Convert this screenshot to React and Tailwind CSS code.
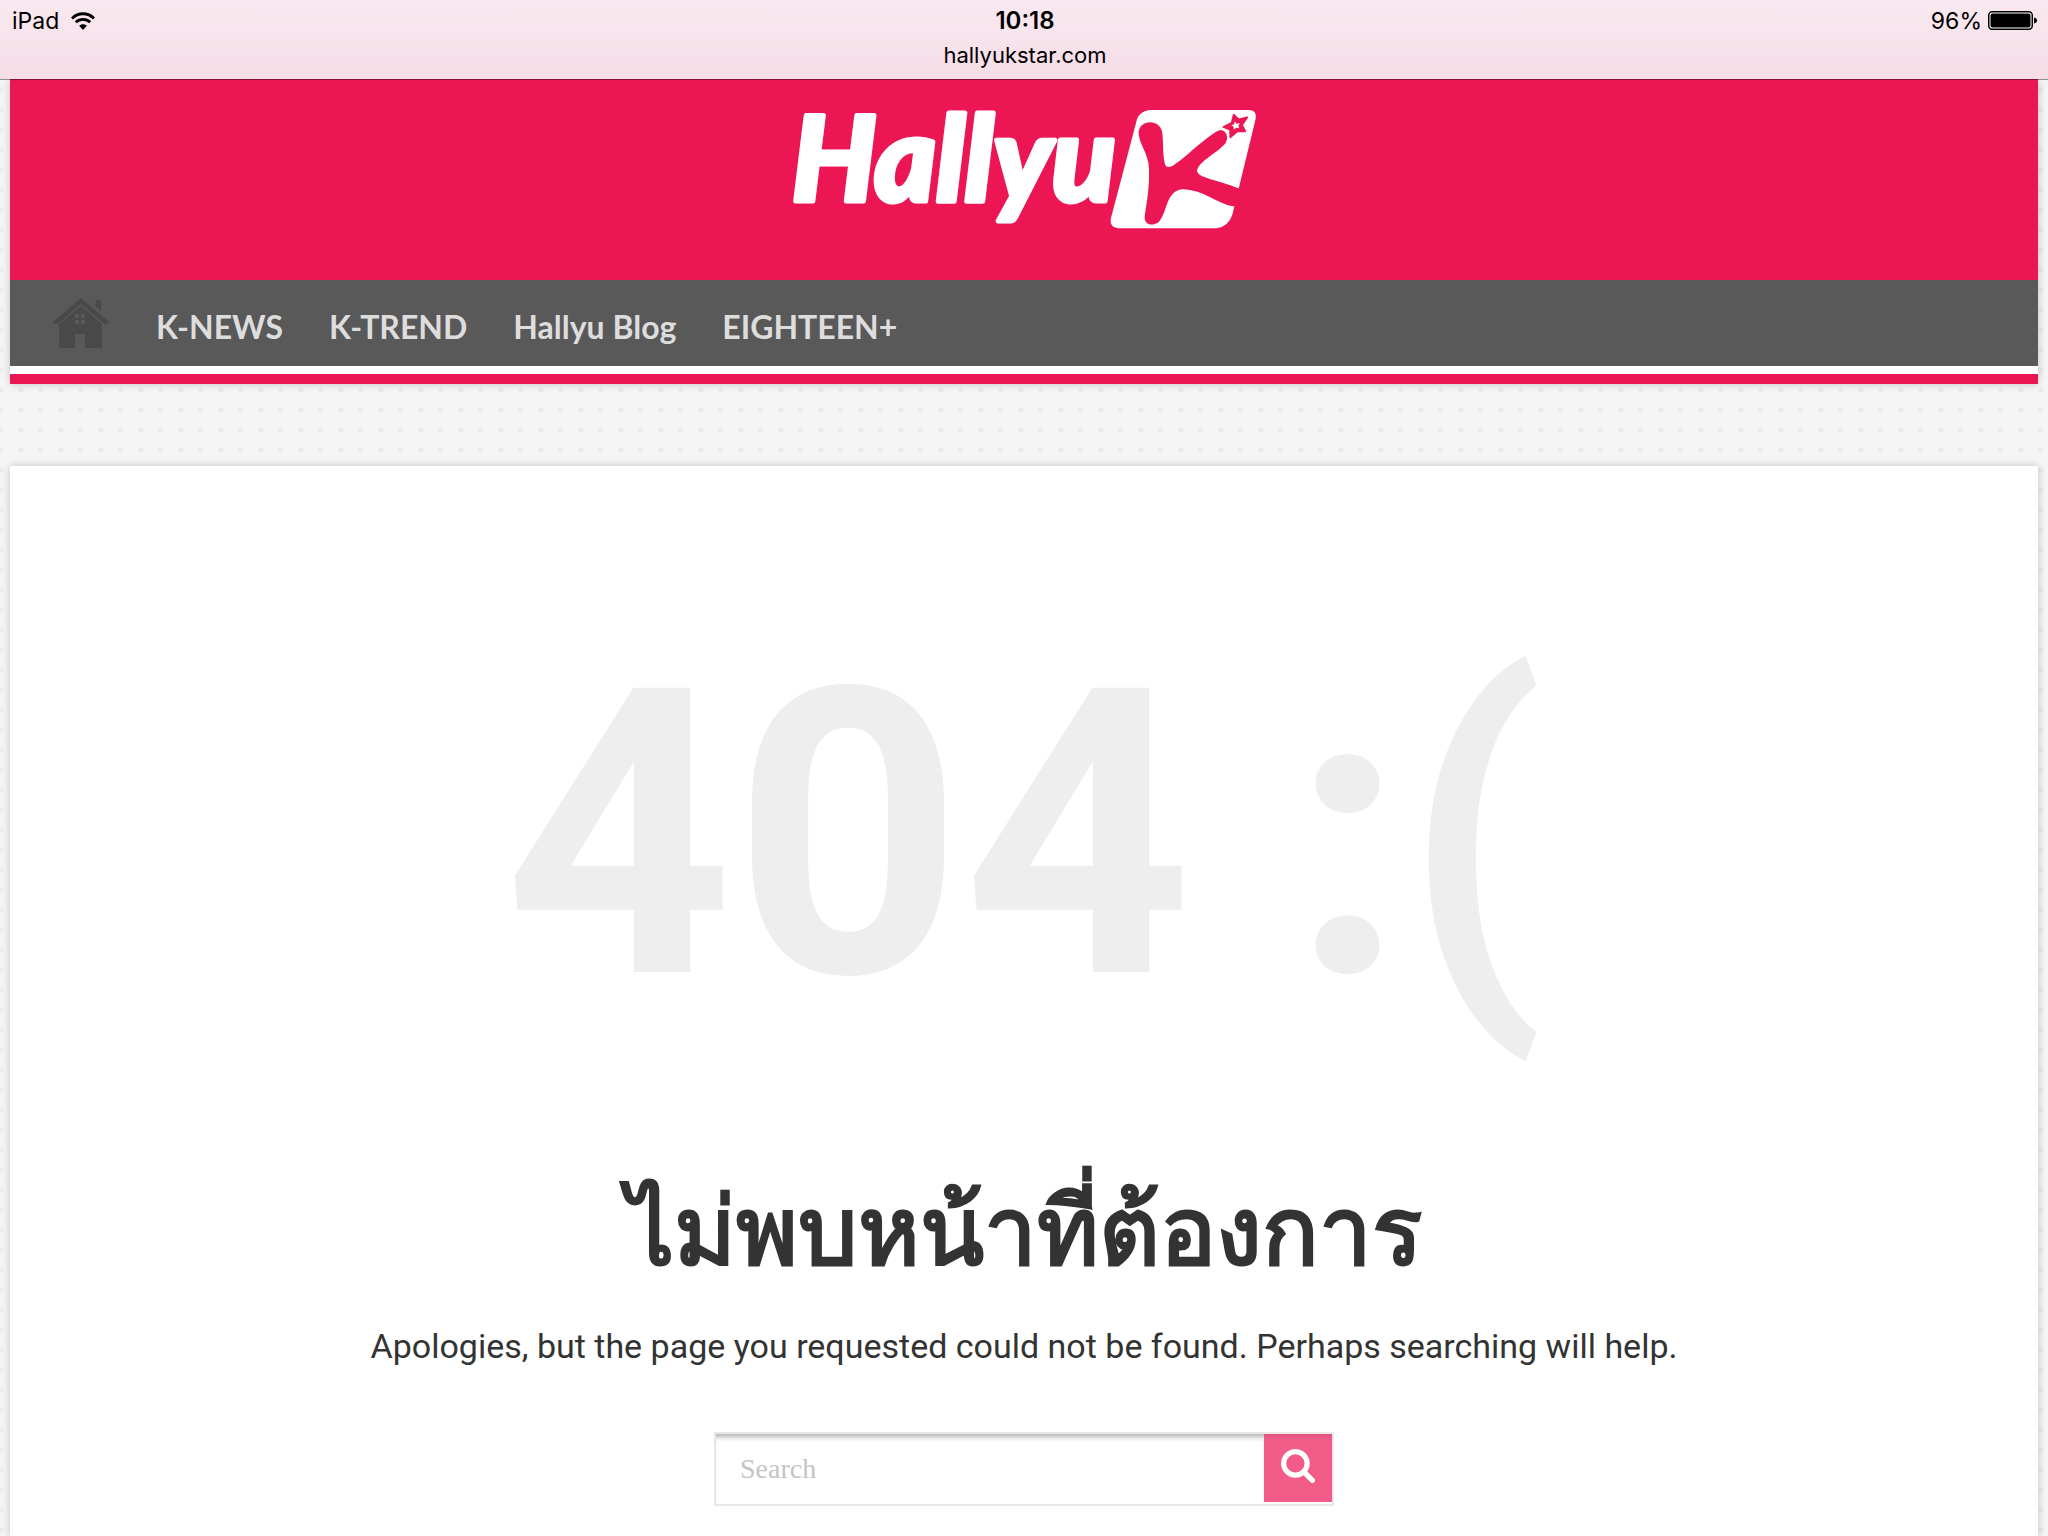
const links = ['K-NEWS', 'K-TREND', 'Hallyu Blog', 'EIGHTEEN+'];

function WifiIcon() {
  return (
    <svg viewBox="0 0 24 18" className="h-[18px] w-6" aria-hidden="true">
      <g fill="none" stroke="#000" strokeWidth="2.8">
        <path d="M1 6.4C7.2.2 16.800.2 23 6.400" />
        <path d="M4.800 10.300c4-3.900 10.400-3.900 14.400 0" />
      </g>
      <path d="M12 18l-3.800-4.200c2.200-2 5.400-2 7.600 0z" />
    </svg>
  );
}

function BatteryIcon() {
  return (
    <svg viewBox="0 0 50 20" className="h-5 w-[50px]" aria-hidden="true">
      <rect x=".75" y=".75" width="43.500" height="17.500" rx="3.500" fill="#fff" stroke="#000" strokeWidth="1.500" />
      <rect x="2.500" y="2.500" width="40" height="14" rx="2" />
      <path d="M46 6.500c4 .5 4 5.500 0 6z" />
    </svg>
  );
}

function StatusBar() {
  return (
    <header className="relative z-10 grid h-[79px] grid-cols-3 bg-linear-to-b from-[#f9e9f0] to-[#f6dde7] pt-1 pr-2.5 pl-3 font-['Inter',sans-serif] text-[23px] leading-[34px] text-black shadow-[0_1px_0_rgba(0,0,0,0.4)]">
      <div className="flex h-[34px] items-center gap-3">
        <span>iPad</span>
        <WifiIcon />
      </div>
      <div className="text-center">
        <p className="text-2xl leading-[34px] font-semibold">10:18</p>
        <p className="text-[22px]">hallyukstar.com</p>
      </div>
      <div className="flex h-[34px] items-center justify-end gap-1.5">
        <span>96%</span>
        <BatteryIcon />
      </div>
    </header>
  );
}

function Logo() {
  return (
    <svg viewBox="39 -30 1395 450" className="h-[150px] w-[465px]" role="img" aria-label="Hallyu K">
      <text
        x="38"
        y="333"
        fontSize="352"
        fill="#fff"
        stroke="#fff"
        strokeWidth="15"
        strokeLinejoin="round"
        className="font-['Lato',sans-serif] font-black italic"
      >
        Hallyu
      </text>
      <path fill="#fff" d="M1112 60H1412Q1434 62 1430 86L1360 374Q1348 410 1312 415H1018Q992 412 995 388L1074 88Q1082 64 1112 60Z" />
      <path
        fill="#ed1654"
        d="M1079 132C1076 86 1146 84 1150 130C1154 160 1150 205 1160 227Q1166 235 1180 228C1220 203 1260 158 1310 126C1340 106 1356 146 1334 166C1310 191 1260 215 1254 242C1256 264 1320 270 1376 294L1400 300L1380 352L1358 348C1320 343 1270 298 1210 298C1160 302 1165 370 1140 395C1122 410 1095 405 1097 380C1102 340 1112 300 1110 235C1108 190 1082 165 1079 132Z"
      />
      <path fill="#ed1654" stroke="#ed1654" strokeWidth="5" strokeLinejoin="round" d="M1364 74L1379 88L1405 82L1389 105L1399 124L1375 124L1354 142L1353 119L1333 111L1358 98Z" />
      <path fill="#fff" d="M1367 94L1373 101L1383 99L1378 107L1381 115L1372 113L1364 119L1364 110L1357 106L1366 103Z" />
    </svg>
  );
}

function HomeIcon() {
  return (
    <svg viewBox="0 0 58 50" className="h-[50px] w-[58px]" fill="#494949" aria-hidden="true">
      <path d="M29 0L58 25L52 26L29 6L6 26L0 25Z" />
      <path d="M44 2H49V13L43 8Z" />
      <path fillRule="evenodd" d="M29 8L50 26V50H33V36H23V50H7V26ZM23 16V20H27V16ZM29 16V20H33V16ZM23 22V26H27V22ZM29 22V26H33V22Z" />
    </svg>
  );
}

function SearchIcon() {
  return (
    <svg viewBox="0 128 1664 1664" className="h-[34px] w-[34px]" fill="#fff" aria-hidden="true">
      <path d="M1152 832q0-185-131.500-316.500t-316.500-131.500-316.500 131.500-131.500 316.500 131.500 316.500 316.500 131.500 316.500-131.500 131.500-316.500zm512 832q0 52-38 90t-90 38q-54 0-90-38l-343-342q-179 124-399 124-143 0-273.500-55.500t-225-150-150-225-55.500-273.500 55.500-273.500 150-225 225-150 273.500-55.500 273.500 55.500 225 150 150 225 55.500 273.500q0 220-124 399l343 343q37 37 37 90z" />
    </svg>
  );
}

export default function App() {
  return (
    <div className="flex min-h-screen flex-col bg-[#f5f5f5] bg-[radial-gradient(circle_at_10px_10px,#e9e9e9_1px,transparent_4px)] bg-size-[20px_20px] bg-position-[-9px_0px]">
      <StatusBar />
      <div className="mx-2.5 flex flex-1 flex-col">
        <div className="border-b-10 border-[#ed1654] bg-white pb-2 shadow-[0_0_8px_rgba(0,0,0,0.2)]">
          <div className="flex h-[201px] justify-center bg-[#ed1654] pt-px">
            <a href="#home" className="h-[150px]">
              <Logo />
            </a>
          </div>
          <nav className="flex h-[86px] items-center gap-[46px] bg-[#595959] px-[42px] font-['Lato',sans-serif] text-[32px] leading-10 font-bold text-[#ddd]">
            <a href="#home" aria-label="Home">
              <HomeIcon />
            </a>
            {links.map((label) => (
              <a key={label} href="#section" className="pt-2">
                {label}
              </a>
            ))}
          </nav>
        </div>
        <main className="mt-[82px] flex flex-1 flex-col items-center bg-white pt-[130px] font-['Roboto',sans-serif] text-[#333] shadow-[0_0_8px_rgba(0,0,0,0.2)]">
          <h1 className="text-[400px] leading-[480px] font-bold text-[#eee]">404 :(</h1>
          <h2 className="mt-[76px] text-[94px] leading-[160px] font-bold">ไม่พบหน้าที่ต้องการ</h2>
          <p className="mt-1 text-[34px] leading-[60px]">
            Apologies, but the page you requested could not be found. Perhaps searching will help.
          </p>
          <form
            onSubmit={(event) => event.preventDefault()}
            className="mt-14 flex h-[74px] w-[620px] items-start border-2 border-[#e8e8e8] bg-white"
          >
            <input
              type="search"
              aria-label="Search"
              placeholder="Search"
              className="h-[70px] min-w-0 flex-1 px-6 font-['Liberation_Serif',serif] text-[28px] shadow-[inset_0_6px_5px_-3px_rgba(0,0,0,0.3)] outline-none placeholder:text-[#c4c4c4]"
            />
            <button type="submit" aria-label="Search" className="flex h-[68px] w-[68px] items-center justify-center bg-[#f35c89] pb-1 shadow-[inset_0_6px_5px_-3px_rgba(0,0,0,0.08)]">
              <SearchIcon />
            </button>
          </form>
        </main>
      </div>
    </div>
  );
}
